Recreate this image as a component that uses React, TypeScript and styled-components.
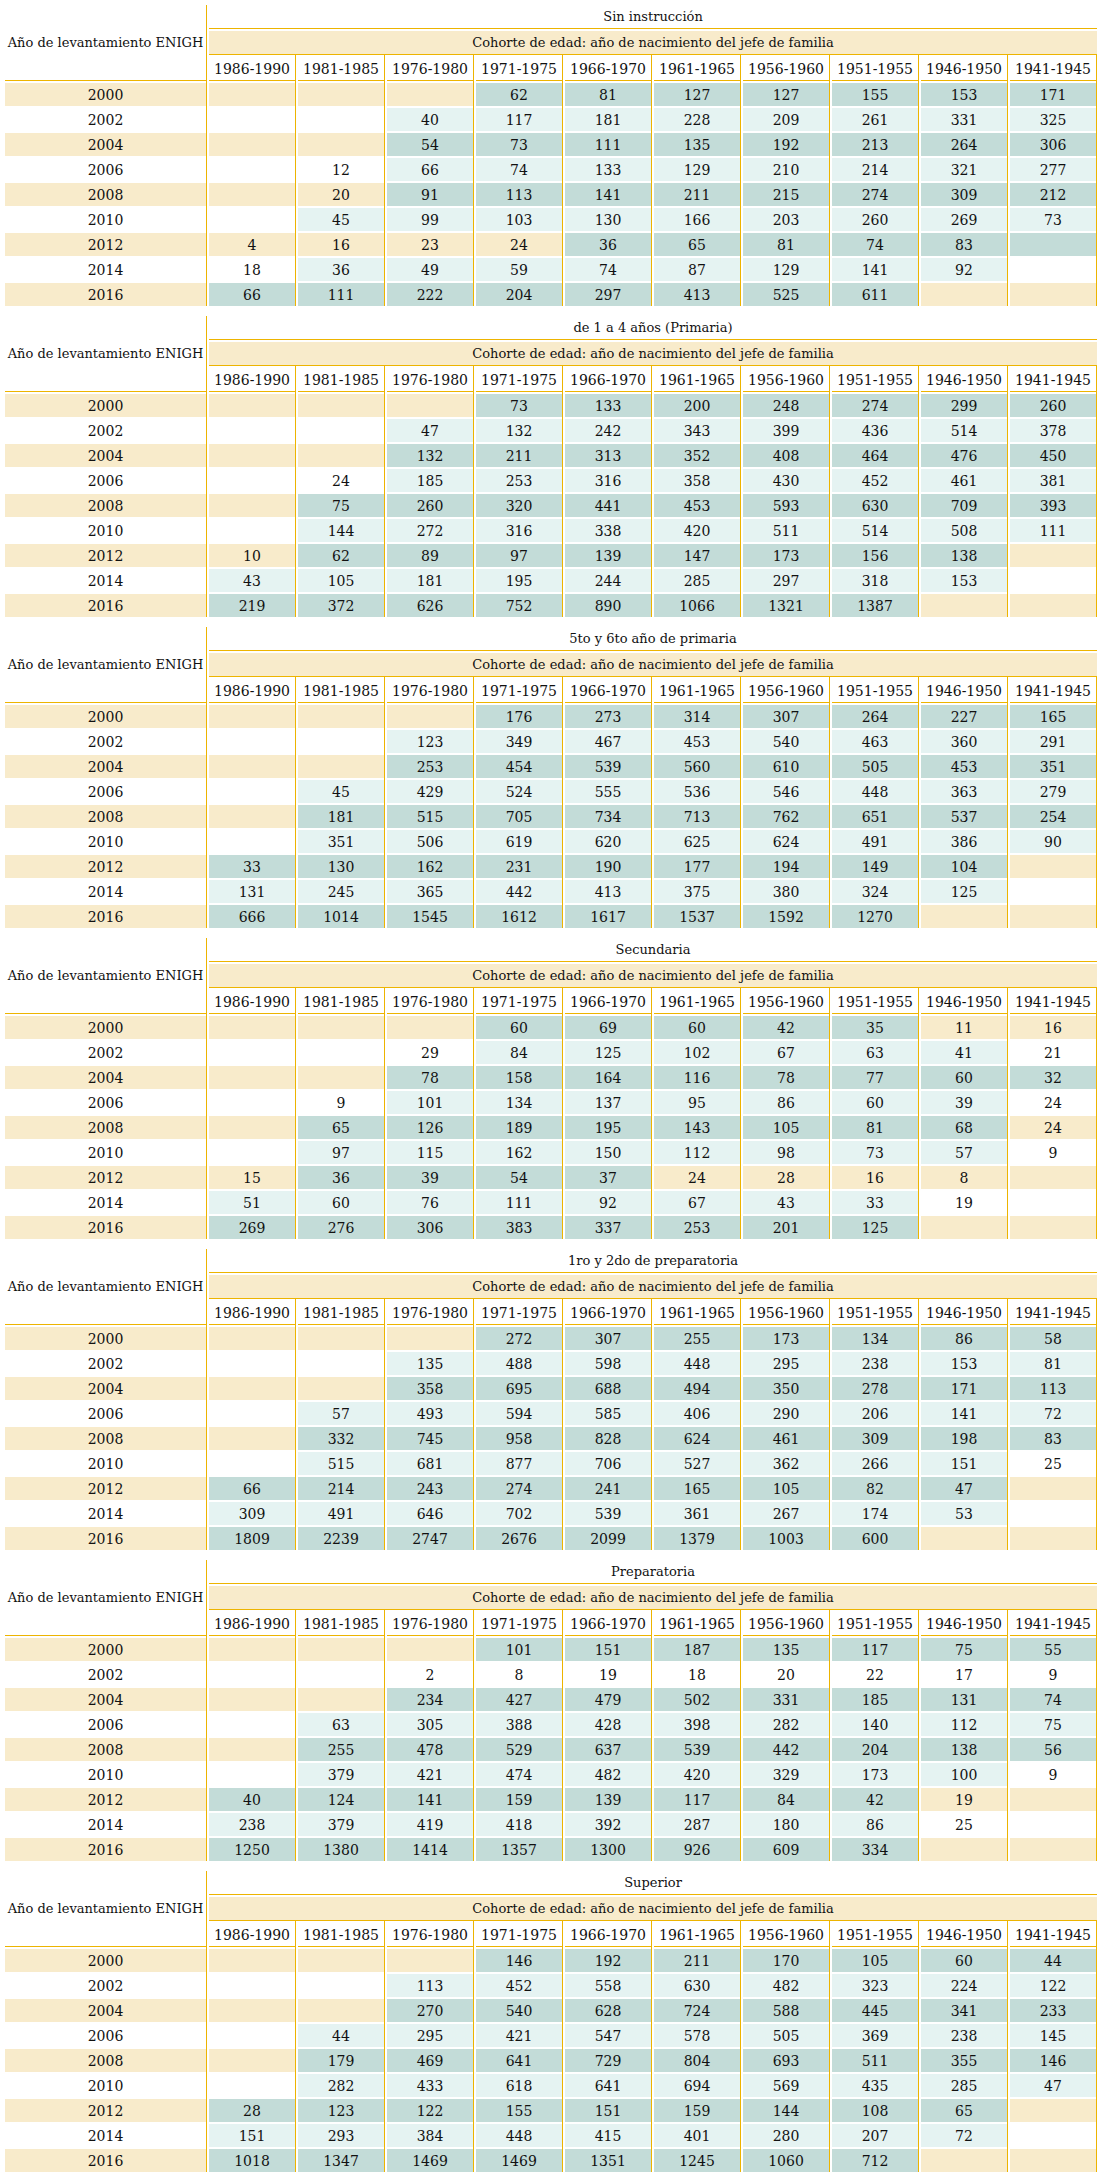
import React from 'react';
import styled, { createGlobalStyle } from 'styled-components';

const GOLD = '#EDB400';
const BEIGE = '#F8EBCB';
const TEAL = '#C3DCD8';
const TEAL_LIGHT = '#E5F3F2';

const GlobalStyle = createGlobalStyle`
    body {
        margin: 0;
        background: #fff;
        color: #111;
        font-family: 'DejaVu Serif', 'Liberation Serif', serif;
        font-size: 13px;
    }
`;

const Page = styled.div`
    display: flex;
    flex-direction: column;
    gap: 10px;
    padding: 5px 0 5px 5px;
`;

const Table = styled.div`
    display: grid;
    grid-template-columns: 202px repeat(10, 87px);
    grid-template-rows: 24px 26px 26px repeat(9, 25px);
    column-gap: 2px;
`;

const Corner = styled.div`
    grid-row: 1 / 4;
    box-sizing: border-box;
    display: flex;
    align-items: center;
    justify-content: center;
    white-space: nowrap;
    border-right: 1px solid ${GOLD};
    border-bottom: 1px solid ${GOLD};
`;

const Title = styled.div`
    grid-column: 2 / -1;
    box-sizing: border-box;
    display: flex;
    align-items: center;
    justify-content: center;
    border-bottom: 1px solid ${GOLD};
`;

const Cohort = styled.div`
    grid-column: 2 / -1;
    box-sizing: border-box;
    display: flex;
    align-items: center;
    justify-content: center;
    padding-top: 2px;
    background: ${BEIGE};
    box-shadow: inset 0 2px 0 #fff;
    border-bottom: 1px solid ${GOLD};
`;

const YearHead = styled.div`
    box-sizing: border-box;
    display: flex;
    align-items: center;
    justify-content: center;
    padding-top: 2px;
    font-size: 14px;
    white-space: nowrap;
    border-right: 1px solid ${GOLD};
    border-bottom: 1px solid ${GOLD};
`;

const Cell = styled.div<{ $stripe: boolean; $mark?: boolean }>`
    box-sizing: border-box;
    display: flex;
    align-items: center;
    justify-content: center;
    padding-top: 2px;
    font-size: 14px;
    border-right: 1px solid ${GOLD};
    box-shadow: inset 0 2px 0 #fff;
    background: ${({ $stripe, $mark }) =>
        $mark ? ($stripe ? TEAL : TEAL_LIGHT) : $stripe ? BEIGE : '#fff'};
`;

const cohorts = [
    '1986-1990', '1981-1985', '1976-1980', '1971-1975', '1966-1970',
    '1961-1965', '1956-1960', '1951-1955', '1946-1950', '1941-1945',
];

const years = [2000, 2002, 2004, 2006, 2008, 2010, 2012, 2014, 2016];

// "-" empty, "*" marked empty, "*123" marked value, "123" plain value
const tables: { title: string; rows: string[] }[] = [
    {
        title: 'Sin instrucción',
        rows: [
            '- - - *62 *81 *127 *127 *155 *153 *171',
            '- - *40 *117 *181 *228 *209 *261 *331 *325',
            '- - *54 *73 *111 *135 *192 *213 *264 *306',
            '- 12 *66 *74 *133 *129 *210 *214 *321 *277',
            '- 20 *91 *113 *141 *211 *215 *274 *309 *212',
            '- *45 *99 *103 *130 *166 *203 *260 *269 *73',
            '4 16 23 24 *36 *65 *81 *74 *83 *',
            '18 *36 *49 *59 *74 *87 *129 *141 *92 -',
            '*66 *111 *222 *204 *297 *413 *525 *611 - -',
        ],
    },
    {
        title: 'de 1 a 4 años (Primaria)',
        rows: [
            '- - - *73 *133 *200 *248 *274 *299 *260',
            '- - *47 *132 *242 *343 *399 *436 *514 *378',
            '- - *132 *211 *313 *352 *408 *464 *476 *450',
            '- 24 *185 *253 *316 *358 *430 *452 *461 *381',
            '- *75 *260 *320 *441 *453 *593 *630 *709 *393',
            '- *144 *272 *316 *338 *420 *511 *514 *508 *111',
            '10 *62 *89 *97 *139 *147 *173 *156 *138 -',
            '*43 *105 *181 *195 *244 *285 *297 *318 *153 -',
            '*219 *372 *626 *752 *890 *1066 *1321 *1387 - -',
        ],
    },
    {
        title: '5to y 6to año de primaria',
        rows: [
            '- - - *176 *273 *314 *307 *264 *227 *165',
            '- - *123 *349 *467 *453 *540 *463 *360 *291',
            '- - *253 *454 *539 *560 *610 *505 *453 *351',
            '- *45 *429 *524 *555 *536 *546 *448 *363 *279',
            '- *181 *515 *705 *734 *713 *762 *651 *537 *254',
            '- *351 *506 *619 *620 *625 *624 *491 *386 *90',
            '*33 *130 *162 *231 *190 *177 *194 *149 *104 -',
            '*131 *245 *365 *442 *413 *375 *380 *324 *125 -',
            '*666 *1014 *1545 *1612 *1617 *1537 *1592 *1270 - -',
        ],
    },
    {
        title: 'Secundaria',
        rows: [
            '- - - *60 *69 *60 *42 *35 11 16',
            '- - 29 *84 *125 *102 *67 *63 *41 21',
            '- - *78 *158 *164 *116 *78 *77 *60 *32',
            '- 9 *101 *134 *137 *95 *86 *60 *39 24',
            '- *65 *126 *189 *195 *143 *105 *81 *68 24',
            '- *97 *115 *162 *150 *112 *98 *73 *57 9',
            '15 *36 *39 *54 *37 24 28 16 8 -',
            '*51 *60 *76 *111 *92 *67 *43 *33 19 -',
            '*269 *276 *306 *383 *337 *253 *201 *125 - -',
        ],
    },
    {
        title: '1ro y 2do de preparatoria',
        rows: [
            '- - - *272 *307 *255 *173 *134 *86 *58',
            '- - *135 *488 *598 *448 *295 *238 *153 *81',
            '- - *358 *695 *688 *494 *350 *278 *171 *113',
            '- *57 *493 *594 *585 *406 *290 *206 *141 *72',
            '- *332 *745 *958 *828 *624 *461 *309 *198 *83',
            '- *515 *681 *877 *706 *527 *362 *266 *151 25',
            '*66 *214 *243 *274 *241 *165 *105 *82 *47 -',
            '*309 *491 *646 *702 *539 *361 *267 *174 *53 -',
            '*1809 *2239 *2747 *2676 *2099 *1379 *1003 *600 - -',
        ],
    },
    {
        title: 'Preparatoria',
        rows: [
            '- - - *101 *151 *187 *135 *117 *75 *55',
            '- - 2 8 19 18 20 22 17 9',
            '- - *234 *427 *479 *502 *331 *185 *131 *74',
            '- *63 *305 *388 *428 *398 *282 *140 *112 *75',
            '- *255 *478 *529 *637 *539 *442 *204 *138 *56',
            '- *379 *421 *474 *482 *420 *329 *173 *100 9',
            '*40 *124 *141 *159 *139 *117 *84 *42 19 -',
            '*238 *379 *419 *418 *392 *287 *180 *86 25 -',
            '*1250 *1380 *1414 *1357 *1300 *926 *609 *334 - -',
        ],
    },
    {
        title: 'Superior',
        rows: [
            '- - - *146 *192 *211 *170 *105 *60 *44',
            '- - *113 *452 *558 *630 *482 *323 *224 *122',
            '- - *270 *540 *628 *724 *588 *445 *341 *233',
            '- *44 *295 *421 *547 *578 *505 *369 *238 *145',
            '- *179 *469 *641 *729 *804 *693 *511 *355 *146',
            '- *282 *433 *618 *641 *694 *569 *435 *285 *47',
            '*28 *123 *122 *155 *151 *159 *144 *108 *65 -',
            '*151 *293 *384 *448 *415 *401 *280 *207 *72 -',
            '*1018 *1347 *1469 *1469 *1351 *1245 *1060 *712 - -',
        ],
    },
];

const parse = (token: string) => {
    const mark = token.startsWith('*');
    const value = token.replace('*', '').replace('-', '');
    return { mark, value };
};

const CohortTable: React.FC<{ title: string; rows: string[] }> = ({ title, rows }) => (
    <Table>
        <Corner>Año de levantamiento ENIGH</Corner>
        <Title>{title}</Title>
        <Cohort>Cohorte de edad: año de nacimiento del jefe de familia</Cohort>
        {cohorts.map((c) => (
            <YearHead key={c}>{c}</YearHead>
        ))}
        {rows.map((row, i) => {
            const stripe = i % 2 === 0;
            return (
                <React.Fragment key={years[i]}>
                    <Cell $stripe={stripe}>{years[i]}</Cell>
                    {row.split(' ').map((token, j) => {
                        const { mark, value } = parse(token);
                        return (
                            <Cell key={j} $stripe={stripe} $mark={mark}>
                                {value}
                            </Cell>
                        );
                    })}
                </React.Fragment>
            );
        })}
    </Table>
);

const App: React.FC = () => {
    return (
        <>
            <GlobalStyle />
            <Page>
                {tables.map((t) => (
                    <CohortTable key={t.title} title={t.title} rows={t.rows} />
                ))}
            </Page>
        </>
    );
};

export default App;
